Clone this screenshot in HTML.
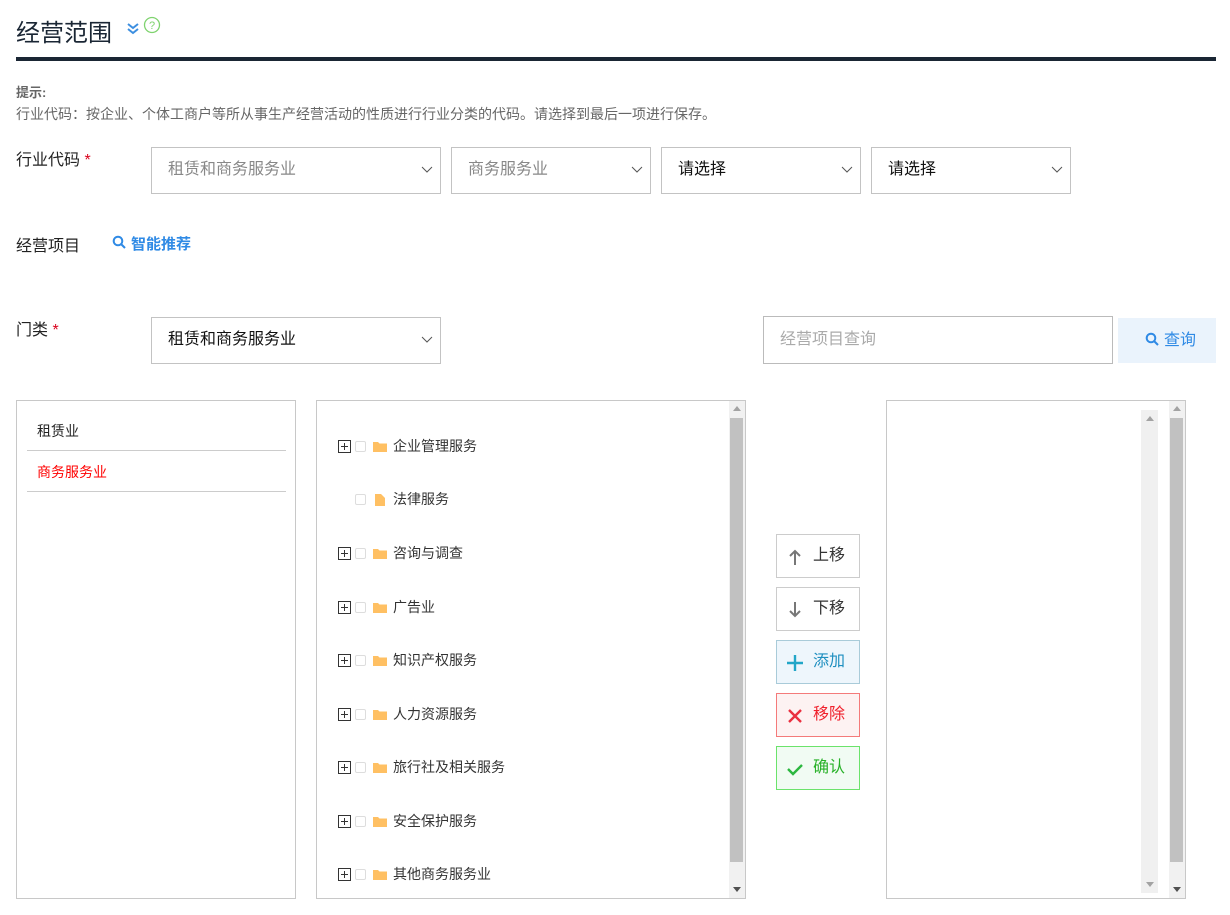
<!DOCTYPE html>
<html><head><meta charset="utf-8"><style>
*{box-sizing:border-box;margin:0;padding:0}
body{width:1230px;height:915px;background:#fff;position:relative;overflow:hidden;font-family:"Liberation Sans","Noto Sans CJK SC",sans-serif;color:#222}
.a{position:absolute;white-space:nowrap}
.sel{position:absolute;border:1px solid #c3c3c3;background:#fff;font-size:16px;padding-left:16px;line-height:44px}
.sel svg{position:absolute;right:7px;top:18px}
.box{position:absolute;border:1px solid #c8c8c8;background:#fff}
.it{position:absolute;left:22px;font-size:14px;color:#333;height:16px;line-height:16px}
.pl{position:absolute;left:0;top:2px;width:13px;height:13px;border:1px solid #333}
.pl:before{content:"";position:absolute;left:2px;top:5px;width:7px;height:1px;background:#333}
.pl:after{content:"";position:absolute;left:5px;top:2px;width:1px;height:7px;background:#333}
.cb{position:absolute;left:17px;top:3px;width:11px;height:11px;border:1px solid #ddd;border-radius:2px}
.fd{position:absolute;left:35px;top:3px}
.tx{position:absolute;left:55px;top:0}
.btn{position:absolute;left:776px;width:84px;height:44px;border:1px solid #ccc;font-size:16px;line-height:42px;padding-left:36px}
.btn svg{position:absolute;left:10px;top:13px}
</style></head><body>
<div class="a" style="left:16px;top:13px;font-size:24px;color:#1a2634;">经营范围</div>
<svg class="a" style="left:126px;top:22px" width="14" height="14" viewBox="0 0 14 14"><path d="M2 2l5 4 5-4M2 7l5 4 5-4" stroke="#3d8fe0" stroke-width="2" fill="none"/></svg>
<svg class="a" style="left:143px;top:16px" width="18" height="18" viewBox="0 0 18 18"><circle cx="9" cy="9" r="7.5" stroke="#7fd36f" stroke-width="1.3" fill="none"/><text x="9" y="13" font-size="11" text-anchor="middle" fill="#7fd36f" font-family="Liberation Sans">?</text></svg>
<div class="a" style="left:16px;top:57px;width:1200px;height:4px;background:#1a2634"></div>
<div class="a" style="left:16px;top:82px;font-size:13px;color:#666;font-weight:bold">提示:</div>
<div class="a" style="left:16px;top:104px;font-size:14px;color:#666">行业代码：按企业、个体工商户等所从事生产经营活动的性质进行行业分类的代码。请选择到最后一项进行保存。</div>
<div class="a" style="left:16px;top:146px;font-size:16px;color:#222">行业代码 <span style="color:#d9001b">*</span></div>
<div class="sel" style="left:151px;top:147px;width:290px;height:47px;color:#888">租赁和商务服务业<svg width="12" height="8"><path d="M1 1l5 5 5-5" stroke="#555" fill="none"/></svg></div>
<div class="sel" style="left:451px;top:147px;width:200px;height:47px;color:#888">商务服务业<svg width="12" height="8"><path d="M1 1l5 5 5-5" stroke="#555" fill="none"/></svg></div>
<div class="sel" style="left:661px;top:147px;width:200px;height:47px;color:#111">请选择<svg width="12" height="8"><path d="M1 1l5 5 5-5" stroke="#555" fill="none"/></svg></div>
<div class="sel" style="left:871px;top:147px;width:200px;height:47px;color:#111">请选择<svg width="12" height="8"><path d="M1 1l5 5 5-5" stroke="#555" fill="none"/></svg></div>
<div class="a" style="left:16px;top:232px;font-size:16px;color:#222">经营项目</div>
<svg class="a" style="left:112px;top:235px" width="14" height="14" viewBox="0 0 14 14"><circle cx="6" cy="6" r="4.3" stroke="#2f8ae5" stroke-width="2" fill="none"/><path d="M9 9l4 4" stroke="#2f8ae5" stroke-width="2"/></svg>
<div class="a" style="left:131px;top:233px;font-size:15px;color:#2f8ae5;font-weight:bold">智能推荐</div>
<div class="a" style="left:16px;top:316px;font-size:16px;color:#222">门类 <span style="color:#d9001b">*</span></div>
<div class="sel" style="left:151px;top:317px;width:290px;height:47px;color:#111">租赁和商务服务业<svg width="12" height="8"><path d="M1 1l5 5 5-5" stroke="#555" fill="none"/></svg></div>
<div class="sel" style="left:763px;top:316px;width:350px;height:48px;color:#aaa;border-color:#bbb;line-height:46px">经营项目查询</div>
<div class="a" style="left:1118px;top:318px;width:98px;height:45px;background:#eaf3fc;color:#2f8ae5;font-size:16px;line-height:45px;padding-left:46px"><svg style="position:absolute;left:27px;top:14px" width="15" height="15" viewBox="0 0 15 15"><circle cx="6" cy="6" r="4.3" stroke="#2f8ae5" stroke-width="2" fill="none"/><path d="M9 9l4 4" stroke="#2f8ae5" stroke-width="2"/></svg>查询</div>

<div class="box" style="left:16px;top:400px;width:280px;height:499px">
<div class="a" style="left:20px;top:20px;font-size:14px;color:#222">租赁业</div>
<div class="a" style="left:10px;top:49px;width:259px;height:1px;background:#ccc"></div>
<div class="a" style="left:20px;top:61px;font-size:14px;color:#f00">商务服务业</div>
<div class="a" style="left:10px;top:90px;width:259px;height:1px;background:#ccc"></div>
</div>

<div class="box" style="left:316px;top:400px;width:430px;height:499px">
<div class="a" style="left:412px;top:0;width:16px;height:497px;background:#f1f1f1"></div>
<div class="a" style="left:413px;top:17px;width:13px;height:444px;background:#c1c1c1"></div>
<svg class="a" style="left:416px;top:5px" width="8" height="5"><path d="M0 5L4 0 8 5z" fill="#a3a3a3"/></svg>
<svg class="a" style="left:416px;top:486px" width="8" height="5"><path d="M0 0L4 5 8 0z" fill="#505050"/></svg>
</div>
<div class="a" style="left:316px;top:0;width:430px;height:915px">
<div class="it" style="top:438px"><span class="pl"></span><span class="cb"></span><svg class="fd" width="14" height="11"><path d="M0 1h5l1.5 1.5H14V11H0z" fill="#ffc063"/></svg><span class="tx">企业管理服务</span></div>
<div class="it" style="top:491px"><span class="cb"></span><svg class="fd" width="14" height="12"><path d="M2 0h6l4 4v8H2z" fill="#ffc063"/></svg><span class="tx">法律服务</span></div>
<div class="it" style="top:545px"><span class="pl"></span><span class="cb"></span><svg class="fd" width="14" height="11"><path d="M0 1h5l1.5 1.5H14V11H0z" fill="#ffc063"/></svg><span class="tx">咨询与调查</span></div>
<div class="it" style="top:599px"><span class="pl"></span><span class="cb"></span><svg class="fd" width="14" height="11"><path d="M0 1h5l1.5 1.5H14V11H0z" fill="#ffc063"/></svg><span class="tx">广告业</span></div>
<div class="it" style="top:652px"><span class="pl"></span><span class="cb"></span><svg class="fd" width="14" height="11"><path d="M0 1h5l1.5 1.5H14V11H0z" fill="#ffc063"/></svg><span class="tx">知识产权服务</span></div>
<div class="it" style="top:706px"><span class="pl"></span><span class="cb"></span><svg class="fd" width="14" height="11"><path d="M0 1h5l1.5 1.5H14V11H0z" fill="#ffc063"/></svg><span class="tx">人力资源服务</span></div>
<div class="it" style="top:759px"><span class="pl"></span><span class="cb"></span><svg class="fd" width="14" height="11"><path d="M0 1h5l1.5 1.5H14V11H0z" fill="#ffc063"/></svg><span class="tx">旅行社及相关服务</span></div>
<div class="it" style="top:813px"><span class="pl"></span><span class="cb"></span><svg class="fd" width="14" height="11"><path d="M0 1h5l1.5 1.5H14V11H0z" fill="#ffc063"/></svg><span class="tx">安全保护服务</span></div>
<div class="it" style="top:866px"><span class="pl"></span><span class="cb"></span><svg class="fd" width="14" height="11"><path d="M0 1h5l1.5 1.5H14V11H0z" fill="#ffc063"/></svg><span class="tx">其他商务服务业</span></div>
</div>

<div class="btn" style="top:534px;color:#333"><svg width="16" height="18" viewBox="0 0 16 18"><path d="M8 17V3M3 8l5-5 5 5" stroke="#777" stroke-width="2" fill="none"/></svg>上移</div>
<div class="btn" style="top:587px;color:#333"><svg width="16" height="18" viewBox="0 0 16 18"><path d="M8 1v14M3 10l5 5 5-5" stroke="#777" stroke-width="2" fill="none"/></svg>下移</div>
<div class="btn" style="top:640px;color:#1e8fc0;background:#eef6fc;border-color:#a9cbd9"><svg width="16" height="18" viewBox="0 0 16 18"><path d="M8 1v16M0 9h16" stroke="#22a6c8" stroke-width="2.4" fill="none"/></svg>添加</div>
<div class="btn" style="top:693px;color:#f0202c;background:#fdf2f2;border-color:#f47a7a"><svg width="16" height="18" viewBox="0 0 16 18"><path d="M2 3l12 12M14 3L2 15" stroke="#ea3040" stroke-width="2.4" fill="none"/></svg>移除</div>
<div class="btn" style="top:746px;color:#27b127;background:#f1fbf3;border-color:#6be36b"><svg width="16" height="18" viewBox="0 0 16 18"><path d="M1 9l5 5 9-9" stroke="#2cb73f" stroke-width="2.4" fill="none"/></svg>确认</div>

<div class="box" style="left:886px;top:400px;width:300px;height:499px">
<div class="a" style="left:254px;top:9px;width:17px;height:483px;background:#f0f0f0"></div>
<svg class="a" style="left:259px;top:15px" width="8" height="5"><path d="M0 5L4 0 8 5z" fill="#a3a3a3"/></svg>
<svg class="a" style="left:259px;top:481px" width="8" height="5"><path d="M0 0L4 5 8 0z" fill="#a3a3a3"/></svg>
<div class="a" style="left:282px;top:0;width:16px;height:497px;background:#f1f1f1"></div>
<div class="a" style="left:283px;top:17px;width:13px;height:444px;background:#c1c1c1"></div>
<svg class="a" style="left:286px;top:5px" width="8" height="5"><path d="M0 5L4 0 8 5z" fill="#a3a3a3"/></svg>
<svg class="a" style="left:286px;top:486px" width="8" height="5"><path d="M0 0L4 5 8 0z" fill="#505050"/></svg>
</div>
</body></html>
